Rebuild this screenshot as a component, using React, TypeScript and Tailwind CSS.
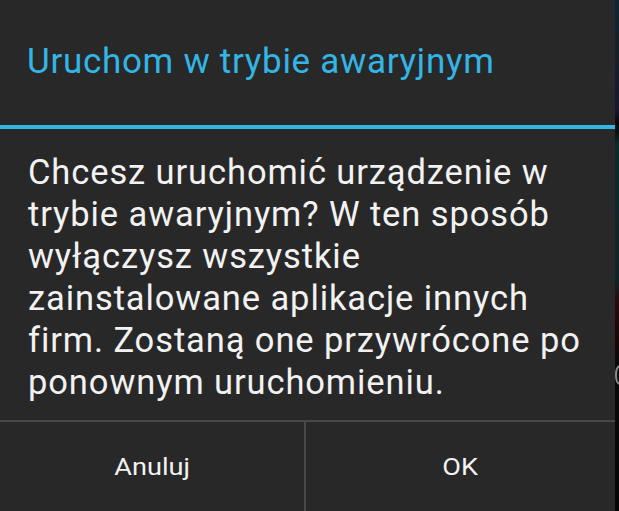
import React from "react";

export default function App() {
  return (
    <div className="flex w-[619px] h-[511px] overflow-hidden bg-black" style={{ fontFamily: "Roboto, 'Noto Sans', sans-serif" }}>
      <div className="flex flex-col w-[615px] h-[511px] bg-[#282828] shrink-0">
        <div className="h-[125px] pl-[27px] pt-[38px]">
          <div className="text-[35px] leading-[48px] text-[#33b5e5] whitespace-nowrap tracking-[0.7px]">Uruchom w trybie awaryjnym</div>
        </div>
        <div className="h-[4px] bg-[#33b5e5]" />
        <div className="h-[291px] pl-[28px] pr-[10px] pt-[22px]">
          <div className="text-[34.5px] leading-[42px] text-[#f2f2f2] tracking-[0.9px] whitespace-nowrap">
            <div>Chcesz uruchomić urządzenie w</div>
            <div>trybie awaryjnym? W ten sposób</div>
            <div>wyłączysz wszystkie</div>
            <div>zainstalowane aplikacje innych</div>
            <div>firm. Zostaną one przywrócone po</div>
            <div>ponownym uruchomieniu.</div>
          </div>
        </div>
        <div className="h-[2px] bg-[#484848]" />
        <div className="flex flex-1">
          <div className="w-[304px] flex items-center justify-center pt-[4px]">
            <span className="text-[23px] text-[#f2f2f2] scale-x-[1.18]">Anuluj</span>
          </div>
          <div className="w-[2px] bg-[#484848]" />
          <div className="flex-1 flex items-center justify-center pt-[4px]">
            <span className="text-[23px] text-[#f2f2f2] scale-x-[1.18]">OK</span>
          </div>
        </div>
      </div>
      <div className="relative w-[4px] h-[511px] overflow-hidden bg-[linear-gradient(to_bottom,#0e2630_0px,#14202c_60px,#1a1630_110px,#050505_125px,#0c2a30_145px,#0e2428_280px,#2a0a0a_300px,#1a0606_340px,#0a0a0a_360px,#050505_511px)]">
        <svg className="absolute left-0 top-[364px]" width="4" height="22" viewBox="0 0 4 22">
          <path d="M4 2 Q1 4 1 11 Q1 18 4 20" stroke="#8a8a8a" strokeWidth="2" fill="none" />
        </svg>
      </div>
    </div>
  );
}
